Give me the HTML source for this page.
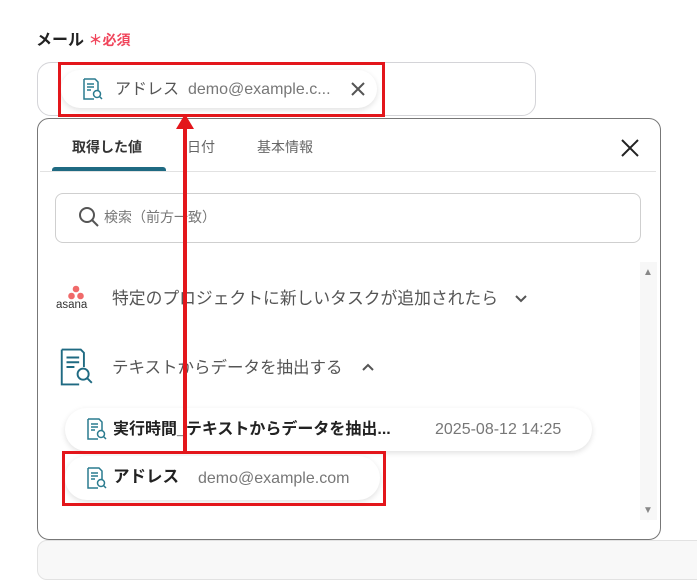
<!DOCTYPE html><html><head><meta charset="utf-8"><style>
*{margin:0;padding:0;box-sizing:border-box}
body{width:697px;height:570px;background:#fff;position:relative;overflow:hidden;font-family:"Liberation Sans","Noto Sans CJK JP",sans-serif;color:#333}
.a{position:absolute;white-space:nowrap;line-height:1.2}
.pill{position:absolute;background:#fff;border-radius:22px;box-shadow:0 2px 6px rgba(0,0,0,.12)}
.red{position:absolute;border:3px solid #e3161b}
</style></head><body>
<div class="a" style="left:36px;top:31px;font-size:16px;font-weight:bold;color:#222">メール <span style="color:#f0455b;font-size:14px">＊必須</span></div>
<div class="a" style="left:37px;top:62px;width:499px;height:54px;border:1px solid #d4d4d8;border-radius:14px"></div>
<div class="pill" style="left:61px;top:70px;width:316px;height:38px;border-radius:19px"></div>
<svg class="a" style="left:80px;top:77px" width="24" height="24" viewBox="0 0 24 24" fill="none" stroke="#2a7b8f" stroke-width="1.5"><path d="M4 2h11l3 3v8M4 2v20h10M7 7h7M7 10h7M7 13h4"/><circle cx="17" cy="17" r="3.5"/><path d="M19.5 19.5l2.5 2.5"/></svg>
<div class="a" style="left:115px;top:80px;font-size:16px;color:#555">アドレス</div>
<div class="a" style="left:188px;top:80px;font-size:16px;color:#777">demo@example.c...</div>
<svg class="a" style="left:350px;top:81px" width="16" height="16" stroke="#555" stroke-width="2"><path d="M2 2l12 12M14 2L2 14"/></svg>
<div class="a" style="left:37px;top:118px;width:624px;height:422px;border:1px solid #777;border-radius:12px;background:#fff"></div>
<div class="a" style="left:72px;top:139px;font-size:14px;font-weight:bold;color:#333">取得した値</div>
<div class="a" style="left:187px;top:139px;font-size:14px;color:#666">日付</div>
<div class="a" style="left:257px;top:139px;font-size:14px;color:#666">基本情報</div>
<div class="a" style="left:52px;top:167px;width:114px;height:5px;background:#1f6a82;border-radius:3px 3px 0 0"></div>
<div class="a" style="left:40px;top:171px;width:616px;height:1px;background:#e2e2e2"></div>
<svg class="a" style="left:620px;top:138px" width="20" height="20" stroke="#222" stroke-width="2"><path d="M2 2l16 16M18 2L2 18"/></svg>
<div class="a" style="left:55px;top:193px;width:586px;height:50px;border:1px solid #cfcfcf;border-radius:8px"></div>
<svg class="a" style="left:78px;top:206px" width="22" height="22" fill="none" stroke="#555" stroke-width="2"><circle cx="9" cy="9" r="7"/><path d="M14 14l6 6"/></svg>
<div class="a" style="left:104px;top:209px;font-size:14px;color:#777">検索（前方一致）</div>
<div class="a" style="left:640px;top:262px;width:17px;height:258px;background:#f7f7f7"></div>
<div class="a" style="left:643px;top:267px;font-size:10px;color:#888">▲</div>
<div class="a" style="left:643px;top:505px;font-size:10px;color:#888">▼</div>
<svg class="a" style="left:66px;top:285px" width="20" height="16" fill="#f06a6a"><circle cx="10" cy="4" r="3.3"/><circle cx="5.5" cy="11" r="3.3"/><circle cx="14.5" cy="11" r="3.3"/></svg>
<div class="a" style="left:56px;top:299px;font-size:11.5px;color:#333">asana</div>
<div class="a" style="left:112px;top:289px;font-size:16.8px;color:#555">特定のプロジェクトに新しいタスクが追加されたら</div>
<svg class="a" style="left:514px;top:294px" width="14" height="10" fill="none" stroke="#555" stroke-width="2"><path d="M2 2l5 5 5-5"/></svg>
<svg class="a" style="left:57px;top:348px" width="38" height="38" viewBox="0 0 24 24" fill="none" stroke="#1f6a82" stroke-width="1.2"><path d="M3 1h12l2 2v9M3 1v22h11M6 6h8M6 9h8M6 12h5"/><circle cx="16.5" cy="16.5" r="3.5"/><path d="M19 19l3 3"/></svg>
<div class="a" style="left:112px;top:359px;font-size:16.5px;color:#555">テキストからデータを抽出する</div>
<svg class="a" style="left:361px;top:362px" width="14" height="10" fill="none" stroke="#555" stroke-width="2"><path d="M2 8l5-5 5 5"/></svg>
<div class="pill" style="left:65px;top:408px;width:527px;height:43px"></div>
<svg class="a" style="left:84px;top:417px" width="24" height="24" viewBox="0 0 24 24" fill="none" stroke="#2a7b8f" stroke-width="1.5"><path d="M4 2h11l3 3v8M4 2v20h10M7 7h7M7 10h7M7 13h4"/><circle cx="17" cy="17" r="3.5"/><path d="M19.5 19.5l2.5 2.5"/></svg>
<div class="a" style="left:113px;top:420px;font-size:16px;font-weight:bold;color:#222">実行時間_テキストからデータを抽出...</div>
<div class="a" style="left:435px;top:420px;font-size:16px;color:#777">2025-08-12 14:25</div>
<div class="pill" style="left:65px;top:456px;width:315px;height:44px"></div>
<svg class="a" style="left:84px;top:466px" width="24" height="24" viewBox="0 0 24 24" fill="none" stroke="#2a7b8f" stroke-width="1.5"><path d="M4 2h11l3 3v8M4 2v20h10M7 7h7M7 10h7M7 13h4"/><circle cx="17" cy="17" r="3.5"/><path d="M19.5 19.5l2.5 2.5"/></svg>
<div class="a" style="left:113px;top:468px;font-size:16.5px;font-weight:bold;color:#222">アドレス</div>
<div class="a" style="left:198px;top:469px;font-size:16px;color:#777">demo@example.com</div>
<div class="a" style="left:37px;top:540px;width:680px;height:40px;background:#f8f8f8;border:1px solid #e2e2e2;border-radius:10px"></div>
<div class="red" style="left:58px;top:62px;width:327px;height:55px"></div>
<div class="red" style="left:62px;top:451px;width:324px;height:55px"></div>
<div class="a" style="left:183px;top:126px;width:4px;height:326px;background:#e3161b"></div>
<svg class="a" style="left:175px;top:114px" width="20" height="16"><path d="M10 0L19 15H1z" fill="#e3161b"/></svg>
</body></html>
